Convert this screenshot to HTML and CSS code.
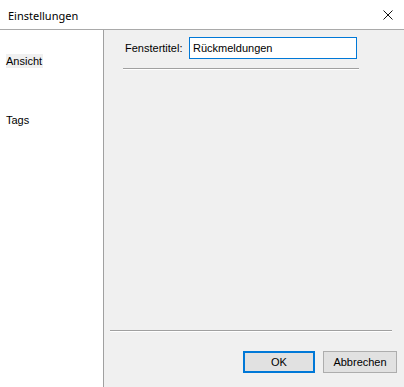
FILE: index.html
```html
<!DOCTYPE html>
<html lang="de">
<head>
    <meta charset="UTF-8">
    <title>Einstellungen</title>
    <link rel="stylesheet" href="styles.css">
</head>
<body>
    <div class="window">
        <div class="titlebar">
            <span class="title">Einstellungen</span>
            <span class="close">
                <svg width="10" height="10" viewBox="0 0 10 10">
                    <path d="M0.5 0.5 L9.5 9.5 M9.5 0.5 L0.5 9.5" stroke="#111" stroke-width="1" fill="none"/>
                </svg>
            </span>
        </div>

        <div class="main">
            <div class="sidebar">
                <div class="nav-item selected">Ansicht</div>
                <div class="nav-item">Tags</div>
            </div>

            <div class="content">
                <div class="form-row">
                    <label class="field-label" for="title">Fenstertitel:</label>
                    <input id="title" class="field-input" type="text" value="Rückmeldungen">
                </div>
                <div class="separator top-sep"></div>

                <div class="spacer"></div>

                <div class="separator bottom-sep"></div>
                <div class="button-row">
                    <button class="btn default">OK</button>
                    <button class="btn">Abbrechen</button>
                </div>
            </div>
        </div>
    </div>
</body>
</html>
```

FILE: styles.css
```css
body {
    margin: 0;
    font-family: "Liberation Sans", Arial, sans-serif;
    font-size: 11px;
    color: #000;
    background-color: #fff;
}
.window {
    width: 404px;
    height: 387px;
    display: flex;
    flex-direction: column;
}
.titlebar {
    height: 29px;
    border-bottom: 1px solid #a9a9a9;
    display: flex;
    align-items: center;
    justify-content: space-between;
    padding: 0 11px 0 8px;
    background-color: #fff;
}
.title {
    font-family: "Noto Sans", "Open Sans", sans-serif;
    font-size: 11px;
    margin-top: 1px;
}
.close {
    display: flex;
    margin-top: 1px;
}
.main {
    flex: 1;
    display: flex;
}
.sidebar {
    width: 103px;
    background-color: #fff;
    border-right: 1px solid #a0a0a0;
    padding-top: 24px;
}
.nav-item {
    display: inline-block;
    margin-left: 6px;
    padding: 1px 1px 0 0;
    height: 13px;
    line-height: 13px;
}
.nav-item.selected {
    background-color: #f0f0f0;
}
.nav-item + .nav-item {
    display: block;
    margin-top: 45px;
    background: none;
}
.content {
    flex: 1;
    display: flex;
    flex-direction: column;
    background-color: #f0f0f0;
}
.form-row {
    display: flex;
    align-items: center;
    padding: 7px 0 0 21px;
}
.field-label {
    width: 64px;
}
.field-input {
    width: 160px;
    height: 16px;
    margin: 0;
    padding: 2px 3px;
    border: 1px solid #0078d7;
    font-family: "Liberation Sans", Arial, sans-serif;
    font-size: 11px;
    outline: none;
    background-color: #fff;
}
.separator {
    border-top: 1px solid #a0a0a0;
    border-bottom: 1px solid #fff;
}
.top-sep {
    margin: 9px 0 0 19px;
    width: 236px;
}
.spacer {
    flex: 1;
}
.bottom-sep {
    margin: 0 12px 0 6px;
}
.button-row {
    display: flex;
    justify-content: flex-end;
    gap: 8px;
    padding: 19px 7px 14px 0;
}
.btn {
    width: 74px;
    height: 22px;
    margin: 0;
    padding: 0;
    border: 1px solid #adadad;
    background-color: #e1e1e1;
    font-family: "Liberation Sans", Arial, sans-serif;
    font-size: 11px;
    color: #000;
}
.btn.default {
    width: 72px;
    border: 2px solid #0078d7;
}
```
